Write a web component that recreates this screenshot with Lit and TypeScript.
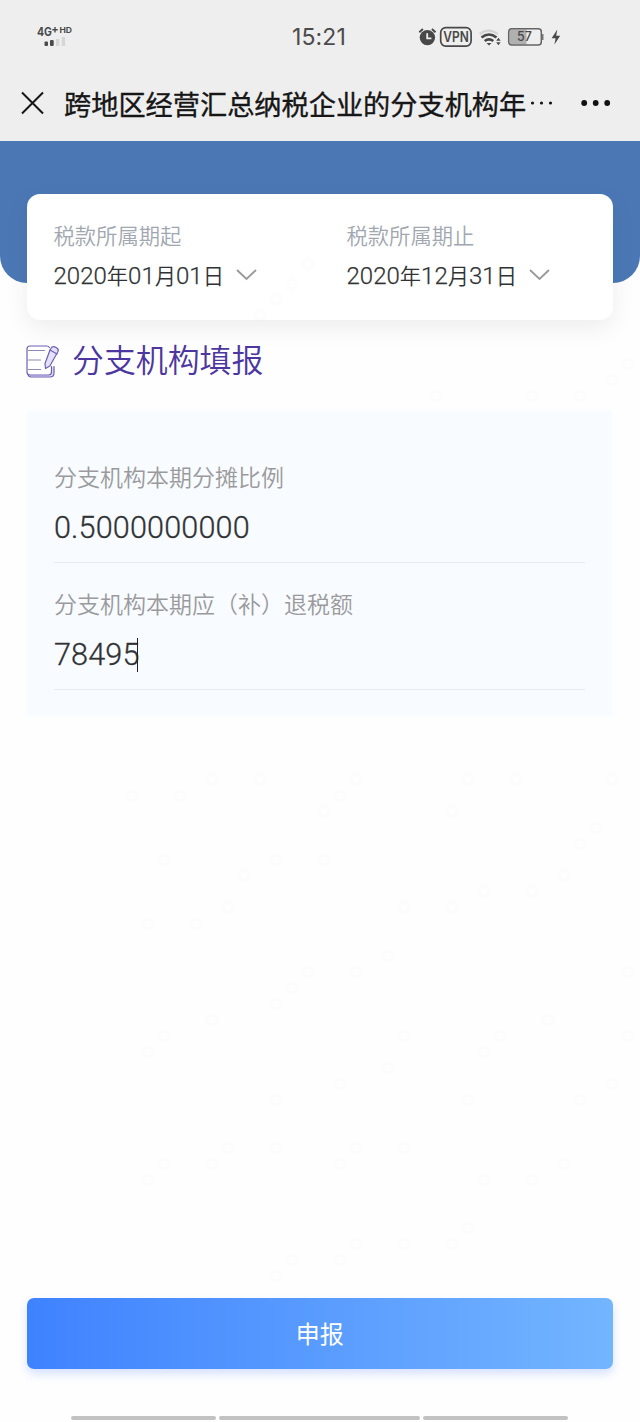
import { LitElement, html, css, svg } from "lit";
import { customElement, state } from "lit/decorators.js";

const DOTS: [number, number][] = [
  [308, 264], [292, 284], [276, 299], [260, 315], [628, 364], [612, 380], [436, 396], [532, 396], [580, 396],
  [212, 779], [260, 779], [356, 779], [468, 779], [516, 779], [612, 779], [132, 796], [180, 796], [340, 796],
  [324, 811], [452, 811], [596, 828], [580, 844], [164, 860], [276, 860], [324, 860], [244, 875], [564, 875],
  [484, 891], [532, 891], [228, 907], [404, 907], [452, 907], [148, 924], [196, 924], [388, 956], [308, 972],
  [356, 972], [628, 972], [292, 988], [276, 1004], [212, 1020], [548, 1020], [164, 1036], [404, 1036], [500, 1036],
  [628, 1036], [148, 1052], [484, 1052], [388, 1068], [340, 1084], [612, 1084], [276, 1100], [468, 1100], [580, 1100],
  [228, 1148], [276, 1148], [356, 1148], [404, 1148], [212, 1164], [164, 1164], [340, 1164], [564, 1164], [148, 1180],
  [484, 1180], [532, 1180], [468, 1228], [356, 1244], [404, 1244], [452, 1244], [292, 1260], [340, 1260], [276, 1276],
];

@customElement("app-root")
class AppRoot extends LitElement {
  @state() private periods = [
    { label: "税款所属期起", y: "2020", m: "01", d: "01" },
    { label: "税款所属期止", y: "2020", m: "12", d: "31" },
  ];

  static styles = css`
    :host {
      display: flex;
      flex-direction: column;
      position: relative;
      width: 640px;
      height: 1422px;
      overflow: hidden;
      background: #fefefe;
      color: #303234;
      font-family: Roboto, "Noto Sans CJK SC", sans-serif;
      line-height: 1;
    }
    * { box-sizing: border-box; }
    svg { display: block; flex: none; }
    .dots { position: absolute; left: 0; top: 0; pointer-events: none; }
    .top { height: 141px; background: #eee; }
    .status { display: grid; grid-template-columns: 292px 126px 1fr; height: 74px; align-items: center; }
    .net { padding-left: 36px; }
    .time { font: 400 23px/28px Inter, sans-serif; color: #4b4b4b; letter-spacing: 0.1px; }
    .nav { display: flex; align-items: center; height: 58px; padding: 0 29px 0 21px; color: #161616; }
    .title { margin-left: 20px; width: 517px; font-size: 27.2px; line-height: 40px; font-weight: 400; -webkit-text-stroke: 0.35px #161616; white-space: nowrap; display: flex; align-items: center; font-family: "Noto Sans CJK SC", sans-serif; }
    .title svg { margin-left: 2px; }
    .hero { height: 142px; padding: 53px 27px 0 26.5px; background: #4b78b5; border-radius: 0 0 27px 27px; }
    .card { display: grid; grid-template-columns: 293px 1fr; height: 126px; padding: 29px 27px 0; background: #fff; border-radius: 13px; box-shadow: 0 8px 24px rgba(0, 0, 0, .07); }
    .label { font-size: 21.3px; line-height: 28px; color: #a1a7b0; font-weight: 350; }
    .date { display: flex; align-items: center; height: 32px; margin-top: 9px; font-size: 21.3px; font-weight: 350; white-space: nowrap; }
    .num { font-size: 24px; font-weight: 300; -webkit-text-stroke: 0.25px #303234; }
    .arrow { margin: -2px 0 0 12px; }
    .section { display: flex; align-items: center; height: 48px; margin: 54px 0 0 25px; }
    .heading { margin-left: 12px; font-size: 31.9px; line-height: 44px; font-weight: 350; color: #4c36a0; }
    .form { margin: 26px 28px 0 27px; height: 305px; padding: 50px 27px 0; background: #f8fbff; box-shadow: 0 0 8px #f9fcff; }
    .field { height: 126.5px; }
    .field .label { height: 36px; font-size: 23px; line-height: 36px; color: #9a9a9c; }
    .paren { font-family: "Noto Sans CJK TC", sans-serif; line-height: 0; }
    .value { display: flex; align-items: center; height: 66px; border-bottom: 1px solid #e6ebf1; font-size: 30.6px; font-weight: 300; letter-spacing: .15px; -webkit-text-stroke: 0.3px #303234; padding-bottom: 2px; }
    .caret { width: 1px; height: 34px; margin-left: -2.5px; background: #222; }
    .space { flex: 1; }
    .submit { height: 71px; margin: 0 27px 0 26.5px; border: 0; border-radius: 7px; color: #fff; background: linear-gradient(90deg, #3f82ff, #73b5ff); box-shadow: 0 5px 10px rgba(70, 125, 255, .22); font: 400 24px/34px "Noto Sans CJK SC", sans-serif; padding: 0 0 2px; }
    .bars { display: grid; grid-template-columns: 145px 201px 145px; gap: 3px; height: 4px; margin: 47px 0 2px 71px; }
    .bar { background: #c2c2c2; border-radius: 2px; }
  `;

  private field(label: unknown, value: string, focused: boolean) {
    return html`<div class="field">
      <div class="label">${label}</div>
      <div class="value"><span>${value}</span>${focused ? html`<i class="caret"></i>` : ""}</div>
    </div>`;
  }

  render() {
    return html`
      <header class="top">
        <div class="status">
          <div class="net">
            <svg width="38" height="24" viewBox="36 24 38 24" fill="#4a4a4a" font-family="Inter" font-weight="700">
              <text x="37" y="35" font-size="11.5" textLength="15" lengthAdjust="spacingAndGlyphs">4G</text>
              <path d="M55 26v5.400M52.300 28.700h5.400" stroke="#4a4a4a" stroke-width="1.4" />
              <text x="59.5" y="32.4" font-size="7.8" textLength="12.5" lengthAdjust="spacingAndGlyphs">HD</text>
              <rect x="44.5" y="40.5" width="3.5" height="4.5" rx="1" /><rect x="50" y="39" width="3.7" height="6" rx="1" />
              <rect x="56" y="38" width="3.4" height="7" fill="#d6d6d6" /><rect x="61.7" y="36" width="3.4" height="9" fill="#d6d6d6" />
            </svg>
          </div>
          <div class="time">15:21</div>
          <svg width="146" height="28" viewBox="418 23 146 28" fill="none" stroke="#484848">
            <circle cx="427.4" cy="37.6" r="7.7" fill="#484848" stroke="none" />
            <path d="M419.3 32.3l3.6-3.2M435.5 32.3l-3.6-3.2" stroke-width="2" />
            <path d="M427.2 33.3v5h4.2" stroke="#eee" stroke-width="1.8" />
            <rect x="440.7" y="27.7" width="30.4" height="18.4" rx="5" stroke-width="1.7" />
            <text x="443.3" y="42.2" font-family="Inter" font-size="14.5" font-weight="600" fill="#484848" stroke="none" textLength="25.5" lengthAdjust="spacingAndGlyphs">VPN</text>
            <path d="M479.7 34q8.8-6.800 18 0" stroke="#d4d4d4" stroke-width="2.4" />
            <path d="M481.500 37.500q7.500-6 15 0M484.700 41q4.300-3.400 8.600 0" stroke-width="2.6" />
            <path d="M486.500 43h5l-2.500 2.500z" fill="#484848" stroke="none" />
            <path d="M496.200 40.800l2.200-3 2.200 3zM496.200 42.200l2.200 3 2.200-3z" fill="#484848" stroke="none" />
            <rect x="509.5" y="29.5" width="17" height="15" fill="#b0b0b0" stroke="none" />
            <rect x="508.7" y="28.7" width="32.6" height="16.3" rx="3" stroke="#656565" stroke-width="1.5" />
            <path d="M542.7 34v6" stroke="#777" stroke-width="1.6" />
            <text x="517" y="41.4" font-family="Inter" font-size="12.5" font-weight="500" fill="#484848" stroke="none" textLength="15">57</text>
            <path d="M557.3 29.5l-5.700 8.800h4l-1.200 6.200 5.800-8.800h-4z" fill="#484848" stroke="none" />
          </svg>
        </div>
        <div class="nav">
          <svg width="23" height="24" viewBox="0 0 23 24"><path d="M1 1.5l21 21M22 1.5l-21 21" stroke="#161616" stroke-width="2" /></svg>
          <div class="title"><span>跨地区经营汇总纳税企业的分支机构年</span><svg width="26" height="6"><g fill="#161616"><circle cx="4.500" cy="3" r="1.6" /><circle cx="13.500" cy="3" r="1.6" /><circle cx="22.500" cy="3" r="1.6" /></g></svg></div>
          <svg width="30" height="8"><g fill="#111"><circle cx="3.2" cy="4" r="2.9" /><circle cx="14.7" cy="4" r="2.9" /><circle cx="26.2" cy="4" r="2.9" /></g></svg>
        </div>
      </header>
      <section class="hero">
        <div class="card">
          ${this.periods.map((p) => html`<div>
            <div class="label">${p.label}</div>
            <div class="date"><span><span class="num">${p.y}</span>年<span class="num">${p.m}</span>月<span class="num">${p.d}</span>日</span>
              <svg class="arrow" width="22" height="14"><path d="M1 2l9.500 9L20 2" fill="none" stroke="#9a9a9a" stroke-width="1.9" /></svg>
            </div>
          </div>`)}
        </div>
      </section>
      <div class="section">
        <svg width="35" height="35" viewBox="25 343.5 35 35" fill="none" stroke="#6c60b4" stroke-width="1.2" stroke-linejoin="round" stroke-linecap="round">
          <path d="M28 374q.5 2.500 3 2.500h19q4 0 4-4V366" fill="#e2def6" />
          <path d="M49.500 347Q48.500 345.500 46.500 345.500H30q-3 0-3 3v23q0 3 3 3h18.500q3 0 3-3V366" fill="#fff" />
          <path d="M28.500 350h16M28.500 359.500h12M28.500 369h12" stroke="#9288ae" />
          <path d="M50 349.500l2-3q1.500-1 4.500.8 2.500 1.700 1.500 3.700l-8.200 14.500-4.300 2.500-.5-5z" fill="#e6e0fc" />
          <path d="M50 349.500l7 4" />
        </svg>
        <div class="heading">分支机构填报</div>
      </div>
      <section class="form">
        ${this.field("分支机构本期分摊比例", "0.5000000000", false)}
        ${this.field(html`分支机构本期应<span class="paren" lang="zh-TW">（</span>补<span class="paren" lang="zh-TW">）</span>退税额`, "78495", true)}
      </section>
      <div class="space"></div>
      <button class="submit">申报</button>
      <div class="bars"><i class="bar"></i><i class="bar"></i><i class="bar"></i></div>
      <svg class="dots" width="640" height="1422" fill="none" stroke="#000" stroke-opacity=".008" stroke-width="4">
        ${DOTS.map(([x, y]) => svg`<circle cx=${x} cy=${y} r="5" />`)}
      </svg>
    `;
  }
}
